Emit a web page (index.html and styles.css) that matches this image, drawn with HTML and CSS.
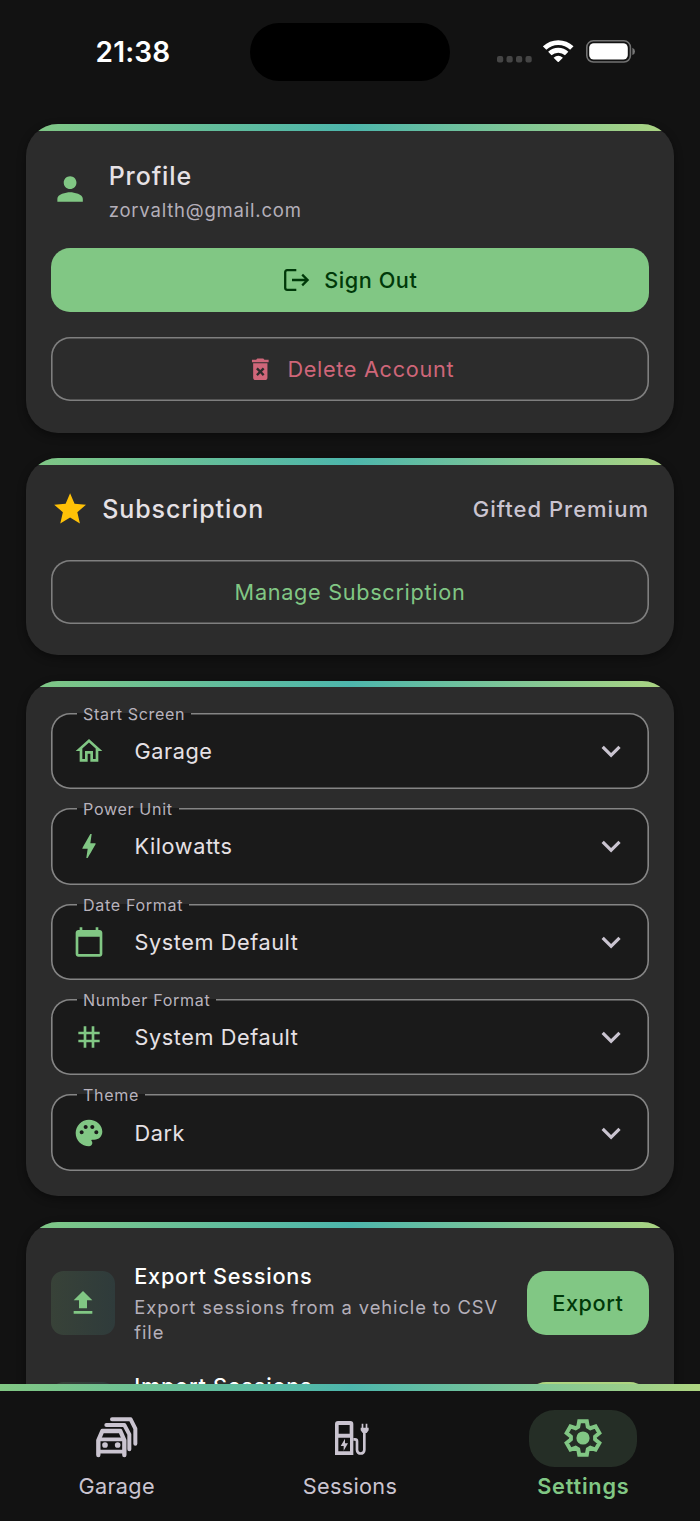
FILE: index.html
```html
<!DOCTYPE html>
<html lang="en">
<head>
<meta charset="utf-8">
<title>Settings</title>
<link rel="stylesheet" href="styles.css">
</head>
<body>
<header class="status">
  <span class="time">21:38</span>
  <div class="island"></div>
  <div class="signals">
    <svg class="dots" viewBox="0 0 36 7"><g fill="#454545"><rect x="0" y="0" width="6.2" height="6.4" rx="2"/><rect x="9.5" y="0" width="6.2" height="6.4" rx="2"/><rect x="19" y="0" width="6.2" height="6.4" rx="2"/><rect x="28.5" y="0" width="6.2" height="6.4" rx="2"/></g></svg>
    <svg class="wifi" viewBox="0 0 30 22"><g fill="none" stroke="#fff" stroke-width="4.8"><path d="M1.6 8A19.3 19.3 0 0 1 28.4 8"/><path d="M6.7 13.4A12 12 0 0 1 23.3 13.4"/></g><path d="M10.4 17.6Q15 13.7 19.6 17.6L15.6 21.5Q15 22.1 14.4 21.5Z" fill="#fff"/></svg>
    <svg class="battery" viewBox="0 0 50 23"><rect x=".8" y=".8" width="43.6" height="21.2" rx="6.5" fill="none" stroke="#727272" stroke-width="1.6"/><rect x="3.2" y="3.3" width="38.6" height="16.3" rx="4.5" fill="#fff"/><path d="M46.4 7.7Q49 9 49 11.4T46.4 15.1Z" fill="#777"/></svg>
  </div>
</header>

<main class="content">
  <section class="card profile">
    <div class="head">
      <svg class="ic38" viewBox="0 0 24 24" fill="#81c784"><path d="M12 12c2.21 0 4-1.79 4-4s-1.79-4-4-4-4 1.79-4 4 1.79 4 4 4zm0 2c-2.67 0-8 1.34-8 4v2h16v-2c0-2.66-5.33-4-8-4z"/></svg>
      <div class="who"><h2 class="title">Profile</h2><p class="email">zorvalth@gmail.com</p></div>
    </div>
    <button class="btn filled"><svg class="logout" viewBox="0 0 26 22" fill="none" stroke="#003909" stroke-width="2.3"><path d="M12.3 1.2H3.2Q1.2 1.2 1.2 3.2V18.8Q1.2 20.8 3.2 20.8H12.3M8 11H23.5M18.2 5.6L23.6 11L18.2 16.4"/></svg><span>Sign Out</span></button>
    <button class="btn outlined danger"><svg class="ic29" viewBox="0 0 24 24" fill="#cf6679"><path d="M6 19c0 1.1.9 2 2 2h8c1.1 0 2-.9 2-2V7H6v12zm2.46-7.12 1.41-1.41L12 12.59l2.12-2.12 1.41 1.41L13.41 14l2.12 2.12-1.41 1.41L12 15.41l-2.12 2.12-1.41-1.41L10.59 14l-2.13-2.12zM15.5 4l-1-1h-5l-1 1H5v2h14V4z"/></svg><span class="delete-text">Delete Account</span></button>
  </section>

  <section class="card subscription">
    <div class="head">
      <svg class="ic38" viewBox="0 0 24 24" fill="#ffc107"><path d="M12 17.27 18.18 21l-1.64-7.03L22 9.24l-7.19-.61L12 2 9.19 8.63 2 9.24l5.46 4.73L5.82 21z"/></svg>
      <h2 class="title">Subscription</h2><span class="plan">Gifted Premium</span>
    </div>
    <button class="btn outlined manage">Manage Subscription</button>
  </section>

  <section class="card fields">
    <div class="field"><span class="label">Start Screen</span>
      <svg class="ic32" viewBox="0 0 24 24"><path d="m12 5.69 5 4.5V18h-2v-6H9v6H7v-7.81l5-4.5M12 3 2 12h3v8h6v-6h2v6h6v-8h3L12 3z"/></svg>
      <span class="value">Garage</span>
      <svg class="chev" viewBox="0 0 24 24"><path d="M7.41 8.59 12 13.17l4.59-4.58L18 10l-6 6-6-6z"/></svg></div>
    <div class="field"><span class="label">Power Unit</span>
      <svg class="ic32" viewBox="0 0 24 24"><path d="M11 21h-1l1-7H7.5c-.88 0-.33-.75-.31-.78C8.48 10.94 10.42 7.54 13.01 3h1l-1 7h3.51c.4 0 .62.19.4.66C12.97 17.55 11 21 11 21z"/></svg>
      <span class="value">Kilowatts</span>
      <svg class="chev" viewBox="0 0 24 24"><path d="M7.41 8.59 12 13.17l4.59-4.58L18 10l-6 6-6-6z"/></svg></div>
    <div class="field"><span class="label">Date Format</span>
      <svg class="ic32" viewBox="0 0 24 24"><path d="M20 3h-1V1h-2v2H7V1H5v2H4c-1.1 0-2 .9-2 2v16c0 1.1.9 2 2 2h16c1.1 0 2-.9 2-2V5c0-1.1-.9-2-2-2zm0 18H4V8h16v13z"/></svg>
      <span class="value">System Default</span>
      <svg class="chev" viewBox="0 0 24 24"><path d="M7.41 8.59 12 13.17l4.59-4.58L18 10l-6 6-6-6z"/></svg></div>
    <div class="field"><span class="label">Number Format</span>
      <svg class="ic32" viewBox="0 0 24 24"><path d="M20 10V8h-4V4h-2v4h-4V4H8v4H4v2h4v4H4v2h4v4h2v-4h4v4h2v-4h4v-2h-4v-4h4zm-6 4h-4v-4h4v4z"/></svg>
      <span class="value">System Default</span>
      <svg class="chev" viewBox="0 0 24 24"><path d="M7.41 8.59 12 13.17l4.59-4.58L18 10l-6 6-6-6z"/></svg></div>
    <div class="field"><span class="label">Theme</span>
      <svg class="ic32" viewBox="0 0 24 24"><path d="M12 2C6.49 2 2 6.49 2 12s4.49 10 10 10c1.38 0 2.5-1.12 2.5-2.5 0-.61-.23-1.2-.64-1.67-.08-.1-.13-.21-.13-.33 0-.28.22-.5.5-.5H16c3.31 0 6-2.69 6-6 0-4.96-4.49-9-10-9zM6.5 13c-.83 0-1.5-.67-1.5-1.5S5.67 10 6.5 10 8 10.67 8 11.5 7.33 13 6.5 13zm3-4C8.67 9 8 8.33 8 7.5S8.67 6 9.5 6s1.5.67 1.5 1.5S10.33 9 9.5 9zm5 0c-.83 0-1.5-.67-1.5-1.5S13.67 6 14.5 6s1.5.67 1.5 1.5S15.33 9 14.5 9zm3 4c-.83 0-1.5-.67-1.5-1.5s.67-1.5 1.5-1.5 1.5.67 1.5 1.5-.67 1.5-1.5 1.5z"/></svg>
      <span class="value">Dark</span>
      <svg class="chev" viewBox="0 0 24 24"><path d="M7.41 8.59 12 13.17l4.59-4.58L18 10l-6 6-6-6z"/></svg></div>
  </section>

  <section class="card data">
    <div class="row">
      <div class="tile"><svg class="ic32" viewBox="0 0 24 24"><path d="M5 20h14v-2H5v2zM5 10h4v6h6v-6h4l-7-7z"/></svg></div>
      <div class="desc"><h3>Export Sessions</h3><p>Export sessions from a vehicle to CSV file</p></div>
      <button class="btn filled small">Export</button>
    </div>
    <div class="row import">
      <div class="tile"><svg class="ic32" viewBox="0 0 24 24"><path d="M5 20h14v-2H5v2zM19 9h-4V3H9v6H5l7 7z"/></svg></div>
      <div class="desc"><h3>Import Sessions</h3><p>Import sessions from a CSV file to a vehicle</p></div>
      <button class="btn filled small lime">Import</button>
    </div>
  </section>
</main>

<nav class="nav">
  <a class="tab"><span class="pill"><svg class="cars" viewBox="0 0 126 122"><g fill="none" stroke="#cac4d0" stroke-width="12" stroke-linejoin="round"><path d="M7 114V70L19 42H73L85 70V114" stroke-linecap="round" stroke-width="13"/><path d="M6 67H86M6 104H86" stroke-width="11"/><path d="M31 24H85L100 52V97" stroke-linecap="round"/><path d="M48 7H104L118 35V80" stroke-linecap="round"/></g><g fill="#cac4d0"><circle cx="27" cy="84" r="8.5"/><circle cx="65" cy="84" r="8.5"/></g></svg></span><span class="tab-label">Garage</span></a>
  <a class="tab"><span class="pill"><svg class="pump" viewBox="0 0 102 102"><path fill="#cac4d0" fill-rule="evenodd" d="M9 0H46Q55 0 55 9V102H0V9Q0 0 9 0ZM11 12V38H44V12ZM10 50V91H45V50ZM30 53V67H39L26 89V75H17Z"/><path fill="none" stroke="#cac4d0" stroke-width="8" d="M55 55H60Q66 55 66 61V87C66 101 88 101 88 87V32"/><path fill="#cac4d0" d="M77 20H80V8H85V20H92V8H97V20H101V28L95 36H83L77 28Z"/></svg></span><span class="tab-label">Sessions</span></a>
  <a class="tab active"><span class="pill"><svg class="gear" viewBox="-19 -19 38 38"><path fill="none" stroke="#81c784" stroke-width="4" d="M-4.8 -11.2L-3.8 -16.7H3.8L4.8 -11.2L7.3 -9.76L12.56 -11.64L16.36 -5.06L12.1 -1.44V1.44L16.36 5.06L12.56 11.64L7.3 9.76L4.8 11.2L3.8 16.7H-3.8L-4.8 11.2L-7.3 9.76L-12.56 11.64L-16.36 5.06L-12.1 1.44V-1.44L-16.36 -5.06L-12.56 -11.64L-7.3 -9.76Z"/><circle r="6.6" fill="#81c784"/></svg></span><span class="tab-label">Settings</span></a>
</nav>
</body>
</html>
```
FILE: styles.css
```css
* { box-sizing: border-box; margin: 0; padding: 0; }
body {
  height: 1521px; overflow: hidden;
  display: flex; flex-direction: column;
  background: #121212; color: #e6e1e5;
  font-family: Inter, "Liberation Sans", sans-serif;
}
svg { display: block; flex: none; }
.status { height: 124.1px; flex: none; display: grid; grid-template-columns: 250px 200px 250px; padding-top: 22.5px; align-items: start; }
.time { font-size: 28px; font-weight: 600; color: #fff; padding: 12.5px 0 0 95.5px; letter-spacing: .2px; line-height: 34px; }
.island { height: 58.5px; border-radius: 30px; background: #000; }
.signals { display: flex; padding: 17.5px 0 0 46.7px; align-items: flex-start; }
.dots { width: 36px; height: 7px; margin-top: 16px; }
.wifi { width: 30.5px; height: 22.3px; margin-left: 10.6px; }
.battery { width: 50px; height: 23px; margin-left: 12px; }

.content { flex: 1; min-height: 0; padding: 0 25.7px; display: flex; flex-direction: column; gap: 25.5px; }
.card {
  flex: none; overflow: hidden; background: #2c2c2c;
  border-radius: 32px; padding: 0 25.4px;
  box-shadow: 0 3px 8px rgba(0,0,0,.4);
}
.card::before {
  content: ""; display: block; height: 6.5px; margin: 0 -25.4px;
  background: linear-gradient(90deg, #81c784, #4db6ac 50%, #aed581);
}
.profile { height: 308.6px; }
.subscription { height: 197.2px; }
.fields { height: 515.4px; }
.data { height: 300px; }

.head { display: flex; align-items: center; }
.ic38 { width: 38.2px; height: 38.2px; }
.ic32 { width: 32px; height: 32px; fill: #81c784; }
.ic29 { width: 28.6px; height: 28.6px; }
.title { font-size: 25px; font-weight: 500; line-height: 38px; letter-spacing: .88px; }
.profile .head { height: 117.7px; }
.who { margin-left: 19.4px; padding-top: 3px; }
.email { font-size: 18.5px; line-height: 27px; letter-spacing: .8px; color: #b4afb9; margin-top: 2px; }
.subscription .head { height: 95.5px; padding-bottom: 6px; }
.subscription .title { margin-left: 13px; }
.plan { margin-left: auto; font-size: 22px; font-weight: 500; color: #cac4d0; letter-spacing: 1px; }

.btn {
  width: 100%; height: 63.6px; border-radius: 19.1px; border: 0;
  display: flex; align-items: center; justify-content: center;
  font: 500 21.7px Inter, "Liberation Sans", sans-serif; letter-spacing: .55px;
}
.filled { background: #81c784; color: #003909; }
.outlined { background: none; box-shadow: inset 0 0 0 1.6px #7f7f7f; font-weight: 400; letter-spacing: .68px; }
.danger { margin-top: 25.5px; color: #cf6679; }
.manage { color: #81c784; }
.logout { width: 26px; height: 22px; margin: 0 14px 0 1.5px; }
.delete-text { margin-left: 13px; }

.field {
  position: relative; height: 76.4px; margin-bottom: 19.05px; border-radius: 19.1px;
  background: #1a1a1a; box-shadow: inset 0 0 0 1.6px #858585;
  display: flex; align-items: center; padding: 0 18.8px 0 22.2px;
}
.fields .field:first-of-type { margin-top: 25.3px; }
.label {
  position: absolute; left: 25.6px; top: -9px; height: 20px; line-height: 20px; padding: 0 6px 0 6.4px;
  font-size: 16.1px; letter-spacing: .65px; color: #b8b3bd;
  background: linear-gradient(#2c2c2c 45%, #1a1a1a 45%);
}
.value { margin-left: 29.2px; font-size: 21.7px; letter-spacing: .58px; flex: 1; }
.chev { width: 38.2px; height: 38.2px; fill: #cac4d0; }

.row { height: 111.4px; display: flex; align-items: center; }
.row:first-of-type { margin-top: 18.9px; }
.tile { width: 64px; height: 63.6px; border-radius: 12.7px; flex: none; display: grid; place-items: center; background: linear-gradient(90deg, #384238, #2f3b3b); }
.desc { margin-left: 19.2px; width: 380px; flex: none; }
.desc h3 { font-size: 21.7px; font-weight: 500; line-height: 32px; color: #fff; letter-spacing: .75px; }
.desc p { font-size: 18.4px; line-height: 25.4px; letter-spacing: .89px; color: #b4afb9; width: 375px; margin-top: 2.5px; }
.import .desc { padding-bottom: 3px; }
.small { width: 122px; margin-left: auto; }
.lime { background: #aed581; }

.nav {
  position: relative; height: 137px; flex: none; background: #121212;
  display: grid; grid-template-columns: repeat(3, 1fr); padding-top: 25.5px;
}
.nav::before {
  content: ""; position: absolute; top: 0; left: 0; right: 0; height: 6.5px;
  background: linear-gradient(90deg, #81c784, #4db6ac 50%, #aed581);
}
.tab { display: flex; flex-direction: column; align-items: center; }
.pill { width: 108px; height: 57.5px; border-radius: 25.5px; display: grid; place-items: center; }
.active .pill { background: #252e26; }
.tab-label { font-size: 21.7px; line-height: 32px; margin-top: 2.5px; color: #cac4d0; letter-spacing: .3px; }
.active .tab-label { color: #81c784; font-weight: 600; letter-spacing: .8px; }
.cars { width: 42px; height: 40.7px; margin-top: -2px; }
.pump { width: 34px; height: 34px; margin-left: 4px; }
.gear { width: 38px; height: 38px; }
```
